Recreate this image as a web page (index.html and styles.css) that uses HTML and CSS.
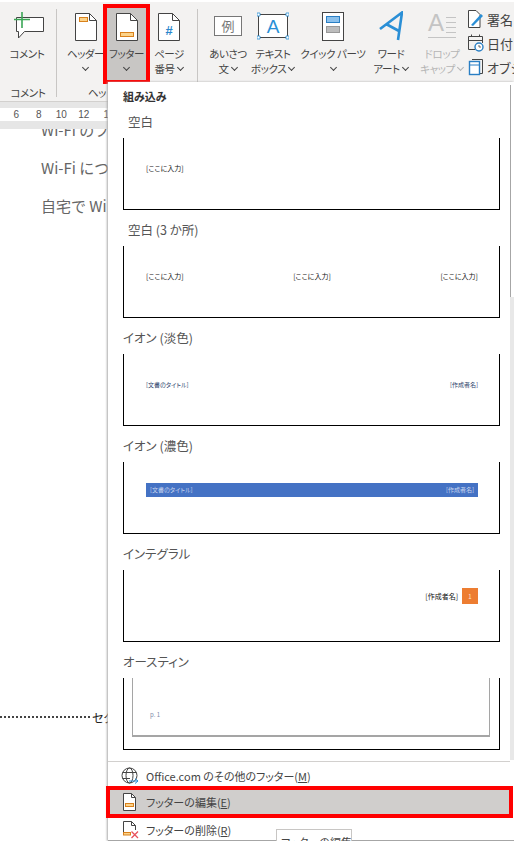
FILE: index.html
```html
<!DOCTYPE html>
<html lang="ja">

<head>
    <title>フッター</title>
    <link rel="stylesheet" href="styles.css">
</head>

<body>
    <div class="app">
        <div class="ribbon">
            <div class="group group-comment">
                <div class="buttons">
                    <div class="rb-btn w-comment">
                        <svg class="rb-icon" width="34" height="30" viewBox="0 0 34 30">
                            <path d="M6.5 6.5H33.5V20.5H14.5L8.500 27V20.500H6.500Z" fill="#fff" stroke="#444" />
                            <path d="M4 8.500H20M12 1V17" stroke="#3aa655" stroke-width="1.600" fill="none" />
                        </svg>
                        <span class="rb-text">コメント</span>
                    </div>
                </div>
                <div class="group-label">コメント</div>
            </div>
            <div class="sep"></div>
            <div class="group group-hf">
                <div class="buttons">
                    <div class="rb-btn w-header">
                        <svg class="rb-icon" width="22" height="30" viewBox="0 0 22 30">
                            <path d="M.5 2.500H14.500L21.500 9.500V29.500H.5Z" fill="#fff" stroke="#444" />
                            <path d="M14.500 2.500V9.500H21.500" fill="none" stroke="#444" />
                            <rect x="4.500" y="6.500" width="8" height="4" fill="#fcd38a" stroke="#d9811c" />
                        </svg>
                        <span class="rb-text">ヘッダー</span>
                        <span class="rb-text"><i class="chev"></i></span>
                    </div>
                    <div class="rb-btn w-footer rb-btn-active">
                        <svg class="rb-icon" width="22" height="30" viewBox="0 0 22 30">
                            <path d="M.5 2.500H14.500L21.500 9.500V29.500H.5Z" fill="#fff" stroke="#444" />
                            <path d="M14.500 2.500V9.500H21.500" fill="none" stroke="#444" />
                            <rect x="4.500" y="21.500" width="13" height="4" fill="#fcd38a" stroke="#d9811c" />
                        </svg>
                        <span class="rb-text">フッター</span>
                        <span class="rb-text"><i class="chev"></i></span>
                    </div>
                    <div class="rb-btn w-page">
                        <svg class="rb-icon" width="22" height="30" viewBox="0 0 22 30">
                            <path d="M.5 2.500H14.500L21.500 9.500V29.500H.5Z" fill="#fff" stroke="#444" />
                            <path d="M14.500 2.500V9.500H21.500" fill="none" stroke="#444" />
                            <text x="11" y="24" class="icon-hash">#</text>
                        </svg>
                        <span class="rb-text">ページ</span>
                        <span class="rb-text">番号 <i class="chev"></i></span>
                    </div>
                </div>
                <div class="group-label group-label-cut">ヘッ</div>
            </div>
            <div class="sep"></div>
            <div class="group">
                <div class="buttons">
                    <div class="rb-btn w-greet">
                        <svg class="rb-icon" width="28" height="30" viewBox="0 0 28 30">
                            <rect x=".5" y="5.500" width="27" height="19" fill="#fff" stroke="#777" />
                            <text x="14" y="20" class="icon-rei">例</text>
                        </svg>
                        <span class="rb-text">あいさつ</span>
                        <span class="rb-text">文 <i class="chev"></i></span>
                    </div>
                    <div class="rb-btn w-textbox">
                        <svg class="rb-icon" width="32" height="30" viewBox="0 0 32 30">
                            <rect x="1.500" y="3.500" width="29" height="23" fill="#fff" stroke="#444" />
                            <path d="M0 2h3v3H0zM29 2h3v3h-3zM0 25h3v3H0zM29 25h3v3h-3z" fill="#fff" stroke="#2a8fd6" stroke-width=".8" />
                            <text x="16" y="22" class="icon-a">A</text>
                        </svg>
                        <span class="rb-text">テキスト</span>
                        <span class="rb-text">ボックス <i class="chev"></i></span>
                    </div>
                    <div class="rb-btn w-quick">
                        <svg class="rb-icon" width="22" height="30" viewBox="0 0 22 30">
                            <rect x=".5" y="1.500" width="21" height="28" fill="#fff" stroke="#444" />
                            <rect x="4.500" y="5.500" width="13" height="6" fill="#8cc1ec" stroke="#2a7fc4" />
                            <rect x="4.500" y="15.500" width="13" height="6" fill="#bdbdbd" stroke="#999" />
                        </svg>
                        <span class="rb-text">クイック パーツ</span>
                        <span class="rb-text"><i class="chev"></i></span>
                    </div>
                    <div class="rb-btn w-word">
                        <svg class="rb-icon" width="24" height="30" viewBox="0 0 24 30">
                            <path d="M1 18 23 1.500 19 29M8 13.500 20 20" fill="none" stroke="#2a8fd6" stroke-width="2.600" />
                        </svg>
                        <span class="rb-text">ワード</span>
                        <span class="rb-text">アート <i class="chev"></i></span>
                    </div>
                    <div class="rb-btn w-drop rb-btn-off">
                        <svg class="rb-icon" width="30" height="30" viewBox="0 0 30 30">
                            <text x="9" y="20" class="icon-drop">A</text>
                            <path d="M19 6.500H29M19 11.500H29M19 16.500H29M19 21.500H29M1 26.500H29" fill="none" stroke="#c4c4c4" />
                        </svg>
                        <span class="rb-text">ドロップ</span>
                        <span class="rb-text">キャップ <i class="chev"></i></span>
                    </div>
                    <div class="small-list">
                        <div class="small-item">
                            <svg width="16" height="18" viewBox="0 0 16 18">
                                <path d="M.5 .5H8L12 4.500V17.500H.5Z" fill="#fff" stroke="#444" />
                                <path d="M3 15 13 4l2 2L5 16Z" fill="#2a8fd6" />
                            </svg>
                            <span>署名</span>
                        </div>
                        <div class="small-item">
                            <svg width="16" height="18" viewBox="0 0 16 18">
                                <path d="M.5 2.500H14.500V9M.5 2.500V15.500H7M.5 6.500H14.500M3.500 .5V3M11.500 .5V3" fill="none" stroke="#444" />
                                <circle cx="11" cy="13" r="4" fill="#fff" stroke="#2a7fc4" stroke-width="1.400" />
                                <path d="M11 11V13H13" fill="none" stroke="#444" stroke-width=".8" />
                            </svg>
                            <span>日付</span>
                        </div>
                        <div class="small-item">
                            <svg width="16" height="18" viewBox="0 0 16 18">
                                <path d="M4 1.500H14.500V15.500H12" fill="none" stroke="#444" />
                                <rect x="1.500" y="3.500" width="10" height="13" fill="#fff" stroke="#2a7fc4" stroke-width="1.400" />
                                <path d="M2 7H11" stroke="#2a7fc4" />
                            </svg>
                            <span>オブジ</span>
                        </div>
                    </div>
                </div>
            </div>
        </div>

        <div class="ruler">
            <div class="ruler-nums">
                <span>6</span>
                <span>8</span>
                <span>10</span>
                <span>12</span>
                <span>1</span>
            </div>
        </div>

        <div class="doc">
            <p class="doc-first">Wi-Fi のフ</p>
            <p>Wi-Fi につ</p>
            <p>自宅で Wi</p>
            <div class="section-break">
                <div class="dots"></div>
                <span>セク</span>
            </div>
        </div>

        <div class="menu">
            <div class="menu-title">組み込み</div>
            <div class="menu-body">
                <div class="gallery">
                    <div class="item-label label-in">空白</div>
                    <div class="thumb">
                        <div class="thumb-row">
                            <span class="tiny">[ここに入力]</span>
                        </div>
                    </div>

                    <div class="item-label label-in">空白 (3 か所)</div>
                    <div class="thumb">
                        <div class="thumb-row row-between">
                            <span class="tiny">[ここに入力]</span>
                            <span class="tiny">[ここに入力]</span>
                            <span class="tiny">[ここに入力]</span>
                        </div>
                    </div>

                    <div class="item-label">イオン (淡色)</div>
                    <div class="thumb">
                        <div class="thumb-row row-between row-low">
                            <span class="tiny tiny-navy">[文書のタイトル]</span>
                            <span class="tiny tiny-navy">[作成者名]</span>
                        </div>
                    </div>

                    <div class="item-label">イオン (濃色)</div>
                    <div class="thumb">
                        <div class="thumb-row row-between dark-bar">
                            <span class="tiny tiny-pale">[文書のタイトル]</span>
                            <span class="tiny tiny-pale">[作成者名]</span>
                        </div>
                    </div>

                    <div class="item-label">インテグラル</div>
                    <div class="thumb">
                        <div class="thumb-row row-end">
                            <span class="tiny">[作成者名]</span>
                            <span class="page-box">1</span>
                        </div>
                    </div>

                    <div class="item-label">オースティン</div>
                    <div class="thumb thumb-austin">
                        <div class="austin-frame">
                            <span class="tiny tiny-grey">p. 1</span>
                        </div>
                    </div>
                </div>

                <div class="scrollbar">
                    <div class="scroll-thumb"></div>
                    <div class="scroll-track"></div>
                </div>
            </div>

            <div class="menu-rows">
                <div class="menu-row">
                    <svg width="18" height="18" viewBox="0 0 18 18">
                        <circle cx="8.500" cy="8.500" r="7.500" fill="none" stroke="#444" />
                        <ellipse cx="8.500" cy="8.500" rx="3.500" ry="7.500" fill="none" stroke="#444" />
                        <path d="M1.500 5.500H15.500M1.500 11.500H9" fill="none" stroke="#444" />
                        <path d="M8 14H17M14 11.500 17 14 14 16.500" fill="none" stroke="#2a8fd6" />
                    </svg>
                    <span>Office.com のその他のフッター(<u>M</u>)</span>
                </div>
                <div class="menu-row menu-row-active">
                    <svg width="18" height="18" viewBox="0 0 18 18">
                        <path d="M2.500 .5H10.500L14.500 4.500V17.500H2.500Z" fill="#fff" stroke="#444" />
                        <path d="M10.500 .5V4.500H14.500" fill="none" stroke="#444" />
                        <rect x="4.500" y="10.500" width="8" height="3" fill="#fcd38a" stroke="#d9811c" />
                    </svg>
                    <span>フッターの編集(<u>E</u>)</span>
                </div>
                <div class="menu-row menu-row-last">
                    <svg width="18" height="18" viewBox="0 0 18 18">
                        <path d="M2.500 14V.5H10.500L14.500 4.500V9" fill="none" stroke="#444" />
                        <path d="M10.500 .5V4.500H14.500" fill="none" stroke="#444" />
                        <rect x="2.500" y="11.500" width="7" height="2.500" fill="#fcd38a" stroke="#d9811c" />
                        <path d="M10.500 10.500 17 17M17 10.500 10.500 17" fill="none" stroke="#e8505b" stroke-width="1.300" />
                    </svg>
                    <span>フッターの削除(<u>R</u>)</span>
                </div>
            </div>
        </div>

        <div class="tooltip">フッターの編集</div>
    </div>
</body>

</html>
```

FILE: styles.css
```css
body {
    margin: 0;
    padding: 0;
    background-color: #fff;
    font-family: "Noto Sans CJK JP", "Noto Sans", sans-serif;
    font-feature-settings: "palt";
    color: #444;
    overflow: hidden;
}

.app {
    position: relative;
    width: 514px;
    height: 841px;
    padding-top: 2px;
    box-sizing: border-box;
    overflow: hidden;
}

/* ribbon */
.ribbon {
    display: flex;
    height: 100px;
    background-color: #f3f2f1;
    border-bottom: 1px solid #d2d0ce;
    box-sizing: border-box;
    overflow: hidden;
}

.group {
    display: flex;
    flex-direction: column;
    flex-shrink: 0;
    padding-top: 6px;
}

.group-comment {
    width: 56px;
}

.group-hf {
    width: 140px;
    padding-left: 8px;
    box-sizing: border-box;
}

.buttons {
    display: flex;
    height: 72px;
}

.group-label {
    margin-top: 6px;
    font-size: 10.500px;
    letter-spacing: -0.4px;
    line-height: 14px;
    text-align: center;
    white-space: nowrap;
}

.group-label-cut {
    padding-left: 23px;
    text-align: left;
}

.sep {
    flex-shrink: 0;
    width: 1px;
    height: 88px;
    margin-top: 7px;
    background-color: #c8c6c4;
}

.group:last-child {
    padding-left: 8px;
}

.rb-btn {
    display: flex;
    flex-direction: column;
    align-items: center;
    flex-shrink: 0;
    height: 72px;
    padding-top: 3px;
    box-sizing: border-box;
}

.rb-icon {
    display: block;
    height: 30px;
    margin-bottom: 5px;
}

.rb-text {
    display: block;
    height: 15px;
    font-size: 10.500px;
    letter-spacing: -0.4px;
    line-height: 15px;
    white-space: nowrap;
}

.rb-btn-active {
    background-color: #c8c6c4;
    outline: 4px solid #f00;
}

.rb-btn-off .rb-text {
    color: #b5b5b5;
}

.w-comment { width: 54px; }
.w-header { width: 41px; margin-right: 1px; }
.w-footer { width: 39px; margin-right: 1px; }
.w-page { width: 44px; }
.w-greet { width: 44px; }
.w-textbox { width: 46px; }
.w-quick { width: 74px; }
.w-word { width: 42px; }
.w-drop { width: 48px; margin-left: 6px; }

.chev {
    display: inline-block;
    width: 4px;
    height: 4px;
    margin: 0 1px 3px;
    border-right: 1px solid #444;
    border-bottom: 1px solid #444;
    transform: rotate(45deg);
}

.rb-btn-off .chev {
    border-color: #b5b5b5;
}

.icon-hash {
    font-family: "Liberation Sans", sans-serif;
    font-size: 13px;
    font-weight: bold;
    fill: #2a86cc;
    text-anchor: middle;
}

.icon-rei {
    font-size: 13px;
    fill: #777;
    text-anchor: middle;
}

.icon-a {
    font-family: "Liberation Sans", sans-serif;
    font-size: 19px;
    fill: #2a8fd6;
    text-anchor: middle;
}

.icon-drop {
    font-family: "Liberation Sans", sans-serif;
    font-size: 24px;
    fill: #c4c4c4;
    text-anchor: middle;
}

.small-list {
    display: flex;
    flex-direction: column;
    gap: 6px;
    margin-left: 2px;
    padding-top: 2px;
}

.small-item {
    display: flex;
    align-items: center;
    gap: 3px;
    height: 18px;
    font-size: 13px;
    white-space: nowrap;
}

/* ruler + page behind the menu */
.ruler {
    height: 27px;
    padding: 6px 0 8px;
    background-color: #e6e6e6;
    box-sizing: border-box;
}

.ruler-nums {
    display: grid;
    grid-template-columns: repeat(5, 22.500px);
    height: 13px;
    padding-left: 5px;
    background-color: #fff;
    font-family: "Liberation Sans", sans-serif;
    font-size: 10px;
    line-height: 13px;
    text-align: center;
    color: #555;
}

.doc {
    width: 108px;
    height: 712px;
    overflow: hidden;
    white-space: nowrap;
}

.doc p {
    margin: 0 0 0 41px;
    font-size: 15px;
    font-feature-settings: normal;
    line-height: 38px;
    color: #666;
}

.doc .doc-first {
    margin-top: -18px;
}

.section-break {
    display: flex;
    align-items: center;
    gap: 2px;
    height: 16px;
    margin-top: 484px;
    font-size: 12px;
    color: #222;
}

.dots {
    flex-shrink: 0;
    width: 90px;
    height: 2px;
    border-top: 2px dotted #444;
    box-sizing: border-box;
}

/* dropdown */
.menu {
    position: absolute;
    top: 82px;
    left: 108px;
    width: 406px;
    height: 759px;
    background-color: #fff;
    border-bottom: 1px solid #a6a6a6;
    box-shadow: -1px 0 2px #aaa;
    box-sizing: border-box;
}

.menu-title {
    height: 20px;
    padding: 5px 0 0 15px;
    box-sizing: border-box;
    font-size: 11px;
    line-height: 18px;
    font-weight: bold;
    color: #333;
}

.menu-body {
    display: flex;
    height: 658px;
}

.gallery {
    width: 402px;
    height: 658px;
    overflow: hidden;
}

.item-label {
    height: 36px;
    padding: 10px 0 0 15px;
    box-sizing: border-box;
    font-size: 12.500px;
    line-height: 20px;
    color: #555;
}

.gallery .label-in {
    padding-left: 20px;
}

.thumb {
    display: flow-root;
    width: 377px;
    height: 72px;
    margin-left: 15px;
    border: 1px solid #000;
    border-top: none;
    box-sizing: border-box;
}

.thumb-row {
    display: flex;
    align-items: center;
    height: 59px;
    padding: 0 21px 0 22px;
}

.row-between {
    justify-content: space-between;
}

.row-low {
    height: 61px;
}

.row-end {
    justify-content: flex-end;
    gap: 4px;
    height: 16px;
    margin-top: 18px;
}

.dark-bar {
    height: 14px;
    margin: 21px 21px 0 22px;
    padding: 0 4px;
    background-color: #4472c4;
}

.tiny {
    font-size: 7px;
    line-height: 8px;
    color: #111;
    white-space: nowrap;
}

.tiny-navy {
    font-size: 6px;
    color: #2b3f6b;
}

.tiny-pale {
    font-size: 6px;
    color: #c9d5ee;
}

.tiny-grey {
    font-size: 6px;
    color: #7d8aa8;
}

.page-box {
    display: flex;
    align-items: center;
    justify-content: center;
    width: 16px;
    height: 16px;
    background-color: #ed7d31;
    color: #fde4d2;
    font-size: 6px;
}

.thumb-austin {
    padding: 0 9px 0 8px;
}

.austin-frame {
    display: flex;
    align-items: flex-start;
    height: 59px;
    padding: 33px 0 0 17px;
    border: 1px solid #a5a5a5;
    border-top: none;
    border-bottom-width: 2px;
    box-sizing: border-box;
}

.scrollbar {
    display: flex;
    flex-direction: column;
    width: 4px;
    height: 675px;
    margin-top: -17px;
}

.scroll-thumb {
    height: 212px;
    border-left: 1px solid #a6a6a6;
    box-sizing: border-box;
}

.scroll-track {
    flex: 1;
    background-color: #e8e8e8;
}

.menu-rows {
    width: 402px;
    margin-top: 1px;
    border-top: 1px solid #d2d0ce;
}

.menu-row {
    display: flex;
    align-items: center;
    gap: 7px;
    height: 28px;
    padding-left: 13px;
    font-size: 11px;
    color: #444;
    white-space: nowrap;
}

.menu-row-active {
    width: 399px;
    height: 24px;
    margin-left: 2px;
    padding-left: 11px;
    box-sizing: border-box;
    background-color: #d0cecc;
    outline: 4px solid #f00;
}

.menu-row-last {
    height: 22px;
    margin-top: 5px;
}

.tooltip {
    position: absolute;
    top: 829px;
    left: 276px;
    width: 76px;
    height: 30px;
    padding: 5px 0 0 4px;
    background-color: #fff;
    border: 1px solid #c8c6c4;
    box-sizing: border-box;
    font-size: 11px;
    line-height: 14px;
    white-space: nowrap;
}
```
